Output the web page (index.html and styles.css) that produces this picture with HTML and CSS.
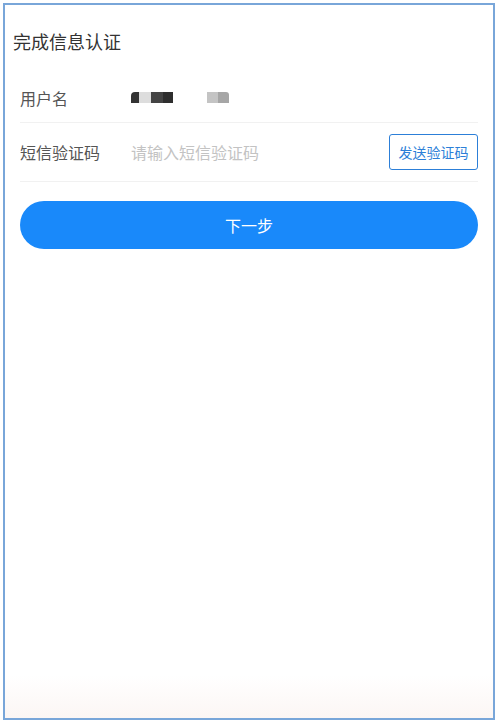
FILE: index.html
```html
<!DOCTYPE html>
<html lang="zh">
<head>
<meta charset="utf-8">
<title>完成信息认证</title>
<link rel="stylesheet" href="styles.css">
</head>
<body>
<div class="frame">
  <h1 class="title">完成信息认证</h1>
  <div class="form">
    <div class="row row-user">
      <span class="label">用户名</span>
      <span class="value">
        <span class="mask">
          <i class="m m1"></i><i class="m m2"></i><i class="m m3"></i><i class="m m4"></i>
        </span>
        <span class="mask mask-b">
          <i class="m m5"></i><i class="m m6"></i>
        </span>
      </span>
    </div>
    <div class="row row-sms">
      <span class="label">短信验证码</span>
      <span class="placeholder">请输入短信验证码</span>
      <button class="sms-btn" type="button">发送验证码</button>
    </div>
    <button class="next-btn" type="button">下一步</button>
  </div>
</div>
</body>
</html>
```
FILE: styles.css
```css
html, body {
  margin: 0;
  padding: 0;
  background: #fff;
}
body {
  font-family: "Noto Sans CJK SC", "Noto Sans", sans-serif;
}
.frame {
  box-sizing: border-box;
  margin: 3px 5px 3px 3px;
  height: 717px;
  border: 2px solid #79a6d9;
  background: linear-gradient(to bottom, #ffffff 0%, #ffffff 94%, #fcf6f4 100%);
}
.title {
  margin: 0;
  padding: 24px 0 0 8px;
  font-size: 18px;
  line-height: 24px;
  font-weight: 400;
  color: #333;
}
.form {
  padding: 20px 15px 0 15px;
}
.row {
  display: flex;
  align-items: center;
  border-bottom: 1px solid #f1f1f1;
}
.row-user {
  height: 49px;
}
.row-sms {
  height: 58px;
}
.label {
  width: 111px;
  flex: none;
  font-size: 16px;
  color: #555;
}
.value {
  display: flex;
  align-items: center;
  gap: 34px;
}
.mask {
  display: flex;
  height: 11px;
}
.m {
  display: block;
  height: 11px;
}
.m1 { width: 8px; background: #333; border-radius: 4px 0 0 0; }
.m2 { width: 12px; background: #ddd; }
.m3 { width: 12px; background: #444; }
.m4 { width: 10px; background: #2e2e2e; }
.m5 { width: 11px; background: #c4c4c4; }
.m6 { width: 11px; background: #a6a6a6; border-radius: 0 3px 0 0; }
.placeholder {
  flex: 1;
  font-size: 16px;
  color: #c3c3c3;
}
.sms-btn {
  box-sizing: border-box;
  width: 89px;
  height: 36px;
  padding: 0;
  border: 1px solid #2c7fd8;
  border-radius: 3px;
  background: #fff;
  color: #2c7fd8;
  font-family: inherit;
  font-size: 14px;
}
.next-btn {
  display: block;
  box-sizing: border-box;
  width: 100%;
  height: 48px;
  margin-top: 19px;
  border: none;
  border-radius: 24px;
  background: #1989fa;
  color: #fff;
  font-family: inherit;
  font-size: 16px;
}
```
